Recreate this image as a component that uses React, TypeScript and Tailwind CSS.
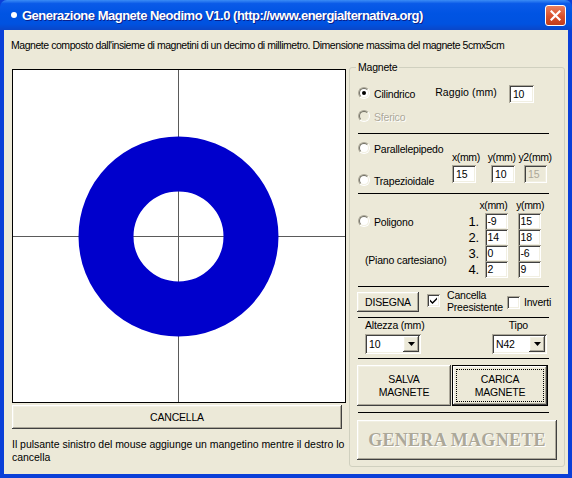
import React from "react";

const font = "font-['Liberation_Sans',Arial,sans-serif]";
const raised =
  "bg-[#ece9d8] shadow-[inset_-1px_-1px_#404040,inset_1px_1px_#ffffff,inset_-2px_-2px_#aca899,inset_2px_2px_#f1efe2]";
const sunken =
  "bg-white shadow-[inset_1px_1px_#aca899,inset_-1px_-1px_#ffffff,inset_2px_2px_#404040,inset_-2px_-2px_#f1efe2]";

function Radio({ checked = false, disabled = false }: { checked?: boolean; disabled?: boolean }) {
  return (
    <span className="relative inline-block w-[12px] h-[12px] shrink-0 rounded-full border border-t-[#aca899] border-l-[#aca899] border-b-white border-r-white">
      <span
        className={`absolute inset-0 rounded-full border border-t-[#716f64] border-l-[#716f64] border-b-[#f1efe2] border-r-[#f1efe2] ${
          disabled ? "bg-[#ece9d8]" : "bg-white"
        }`}
      />
      {checked && <span className="absolute left-[3px] top-[3px] w-[4px] h-[4px] rounded-full bg-black" />}
    </span>
  );
}

function Check({ checked = false }: { checked?: boolean }) {
  return (
    <span className={`relative inline-block w-[13px] h-[13px] shrink-0 ${sunken}`}>
      {checked && (
        <svg className="absolute left-[2px] top-[2px]" width="9" height="9" viewBox="0 0 9 9">
          <path d="M1 3.5 L3.5 6 L8 1.5 L8 3.5 L3.5 8 L1 5.5 Z" fill="#000" />
        </svg>
      )}
    </span>
  );
}

function Field({ value, w, disabled = false }: { value: string; w: string; disabled?: boolean }) {
  return (
    <div
      className={`${w} h-[18px] flex items-center pl-[4px] ${sunken} ${
        disabled ? "!bg-[#ece9d8] text-[#aca899]" : "text-black"
      }`}
    >
      {value}
    </div>
  );
}

function Combo({ value, w }: { value: string; w: string }) {
  return (
    <div className={`${w} h-[20px] flex items-center justify-between pl-[4px] pr-[2px] ${sunken}`}>
      <span>{value}</span>
      <span className={`w-[16px] h-[16px] flex items-center justify-center ${raised}`}>
        <svg width="7" height="4" viewBox="0 0 7 4">
          <path d="M0 0 H7 L3.5 4 Z" fill="#000" />
        </svg>
      </span>
    </div>
  );
}

function Sep() {
  return <div className="ml-[8px] w-[191px] h-px bg-black shrink-0" />;
}

export default function App() {
  return (
    <div
      className={`w-[572px] h-[478px] flex flex-col bg-[#0a3fd8] text-[10.5px] tracking-[-0.2px] leading-[13px] text-black ${font}`}
    >
      {/* title bar */}
      <div className="h-[30px] shrink-0 flex items-center rounded-t-[7px] bg-[linear-gradient(180deg,#3b8cf5_0%,#0a5ae8_12%,#0054e3_45%,#0052e0_80%,#0a46c8_100%)]">
        <span className="ml-[11px] w-[6px] h-[6px] rounded-full bg-white" />
        <span className="ml-[5px] text-white font-bold text-[13px] tracking-[-0.5px] [text-shadow:1px_1px_#0a1e8a]">
          Generazione Magnete Neodimo V1.0 (http://www.energialternativa.org)
        </span>
        <span className="ml-auto mr-[6px] w-[21px] h-[21px] rounded-[3px] border border-white bg-[linear-gradient(180deg,#e9805f_0%,#d8502c_55%,#c23d1a_100%)] flex items-center justify-center">
          <svg width="11" height="11" viewBox="0 0 11 11">
            <path d="M1.5 1.5 L9.5 9.5 M9.5 1.5 L1.5 9.5" stroke="#fff" strokeWidth="2.2" strokeLinecap="square" />
          </svg>
        </span>
      </div>

      {/* client */}
      <div className="mx-[4px] mb-[4px] flex-1 bg-[#ece9d8] flex flex-col">
        <div className="pl-[7px] pt-[8px] leading-[14px] tracking-[-0.45px]">
          Magnete composto dall'insieme di magnetini di un decimo di millimetro. Dimensione massima del magnete 5cmx5cm
        </div>

        <div className="mt-[10px] pl-[8px] flex">
          {/* left column */}
          <div className="w-[334px] pt-[7px] flex flex-col">
            <div className="w-[334px] h-[334px] bg-white border border-black">
              <svg width="332" height="332" viewBox="0 0 332 332">
                <line x1="165.5" y1="0" x2="165.5" y2="332" stroke="#5a5a5a" strokeWidth="1" />
                <line x1="0" y1="166.5" x2="332" y2="166.5" stroke="#5a5a5a" strokeWidth="1" />
                <circle cx="165.5" cy="166.5" r="72.5" fill="none" stroke="#0000cc" strokeWidth="55" />
              </svg>
            </div>
            <button className={`mt-[2px] w-[330px] h-[24px] flex items-center justify-center ${raised}`}>CANCELLA</button>
            <div className="mt-[9px] leading-[13px] tracking-[-0.03px] whitespace-nowrap">
              Il pulsante sinistro del mouse aggiunge un mangetino mentre il destro lo
              <br />
              cancella
            </div>
          </div>

          {/* group box */}
          <div className="relative ml-[3px] mt-[5px] w-[216px] h-[400px] rounded-[3px] border border-[#d0d0bf] flex flex-col">
            <span className="absolute left-[6px] -top-[7px] px-[2px] bg-[#ece9d8]">Magnete</span>

            {/* Cilindrico */}
            <div className="mt-[17px] h-[18px] flex items-center">
              <span className="ml-[8px]">
                <Radio checked />
              </span>
              <span className="ml-[4px]">Cilindrico</span>
              <span className="ml-[20px] -mt-[4px] tracking-[0.1px]">Raggio (mm)</span>
              <div className="ml-[12px]">
                <Field value="10" w="w-[25px]" />
              </div>
            </div>

            {/* Sferico */}
            <div className="mt-[6px] h-[16px] flex items-center">
              <span className="ml-[8px]">
                <Radio disabled />
              </span>
              <span className="ml-[4px] text-[#aca899] [text-shadow:1px_1px_#ffffff]">Sferico</span>
            </div>

            <div className="mt-[8px]">
              <Sep />
            </div>

            {/* Parallelepipedo / Trapezioidale */}
            <div className="h-[59px] flex">
              <div className="flex flex-col">
                <div className="mt-[7px] h-[16px] flex items-center">
                  <span className="ml-[8px]">
                    <Radio />
                  </span>
                  <span className="ml-[4px]">Parallelepipedo</span>
                </div>
                <div className="mt-[16px] h-[16px] flex items-center">
                  <span className="ml-[8px]">
                    <Radio />
                  </span>
                  <span className="ml-[4px]">Trapezioidale</span>
                </div>
              </div>
              <div className="ml-auto mr-[17px] w-[95px] flex flex-col">
                <div className="mt-[17px] h-[12px] flex items-center tracking-[-0.4px]">
                  <span>x(mm)</span>
                  <span className="ml-[8px]">y(mm)</span>
                  <span className="ml-[3px]">y2(mm)</span>
                </div>
                <div className="mt-[2px] flex">
                  <Field value="15" w="w-[24px]" />
                  <div className="ml-[15px]">
                    <Field value="10" w="w-[24px]" />
                  </div>
                  <div className="ml-[9px]">
                    <Field value="15" w="w-[23px]" disabled />
                  </div>
                </div>
              </div>
            </div>

            <Sep />

            {/* Poligono */}
            <div className="h-[92px] flex">
              <div className="flex flex-col">
                <div className="mt-[20px] h-[16px] flex items-center">
                  <span className="ml-[8px]">
                    <Radio />
                  </span>
                  <span className="ml-[4px]">Poligono</span>
                </div>
                <div className="mt-[23px] ml-[15px] leading-[14px]">(Piano cartesiano)</div>
              </div>
              <div className="ml-auto mr-[20px] flex flex-col">
                <div className="mt-[5px] h-[12px] flex items-center tracking-[-0.4px]">
                  <span className="ml-[11px]">x(mm)</span>
                  <span className="ml-[9px]">y(mm)</span>
                </div>
                {[
                  ["1.", "-9", "15"],
                  ["2.", "14", "18"],
                  ["3.", "0", "-6"],
                  ["4.", "2", "9"],
                ].map(([n, x, y], i) => (
                  <div key={n} className={`${i === 0 ? "mt-[2px]" : ""} h-[16px] flex items-center`}>
                    <span className="w-[16px] text-[13px]">{n}</span>
                    <div className="h-[16px] flex items-center">
                      <div className={`w-[23px] h-[17px] flex items-center pl-[3px] ${sunken}`}>{x}</div>
                    </div>
                    <div className="ml-[10px] h-[16px] flex items-center">
                      <div className={`w-[23px] h-[17px] flex items-center pl-[3px] ${sunken}`}>{y}</div>
                    </div>
                  </div>
                ))}
              </div>
            </div>

            <Sep />

            {/* Disegna row */}
            <div className="h-[30px] flex items-start">
              <button className={`ml-[7px] mt-[5px] w-[62px] h-[20px] flex items-center justify-center ${raised}`}>
                DISEGNA
              </button>
              <span className="ml-[8px] mt-[7px]">
                <Check checked />
              </span>
              <div className="ml-[7px] mt-[2px] leading-[12px]">
                Cancella
                <br />
                Preesistente
              </div>
              <span className="ml-[4px] mt-[9px]">
                <Check />
              </span>
              <span className="ml-[4px] mt-[9px]">Inverti</span>
            </div>

            <Sep />

            {/* Altezza / Tipo */}
            <div className="h-[40px] flex flex-col">
              <div className="mt-[1px] h-[13px] flex">
                <span className="ml-[15px]">Altezza (mm)</span>
                <span className="ml-auto mr-[36px]">Tipo</span>
              </div>
              <div className="mt-[2px] flex">
                <div className="ml-[15px]">
                  <Combo value="10" w="w-[56px]" />
                </div>
                <div className="ml-auto mr-[17px]">
                  <Combo value="N42" w="w-[55px]" />
                </div>
              </div>
            </div>

            <Sep />

            {/* Salva / Carica */}
            <div className="mt-[6px] ml-[7px] flex">
              <button className={`w-[94px] h-[41px] flex flex-col items-center justify-center leading-[13px] ${raised}`}>
                <span>SALVA</span>
                <span>MAGNETE</span>
              </button>
              <button className="ml-[1px] w-[96px] h-[41px] border border-black p-[0px]">
                <div className={`w-full h-full p-[3px] ${raised}`}>
                  <div className="w-full h-full border border-dotted border-black flex flex-col items-center justify-center leading-[13px]">
                    <span>CARICA</span>
                    <span>MAGNETE</span>
                  </div>
                </div>
              </button>
            </div>

            <div className="mt-[6px]">
              <Sep />
            </div>

            {/* Genera */}
            <button
              className={`mt-[7px] ml-[7px] w-[200px] h-[40px] flex items-center justify-center font-['Liberation_Serif','Times_New_Roman',serif] font-bold text-[18px] tracking-[0.3px] text-[#aca899] [text-shadow:1px_1px_#ffffff] ${raised}`}
            >
              GENERA MAGNETE
            </button>
          </div>
        </div>
      </div>
    </div>
  );
}
